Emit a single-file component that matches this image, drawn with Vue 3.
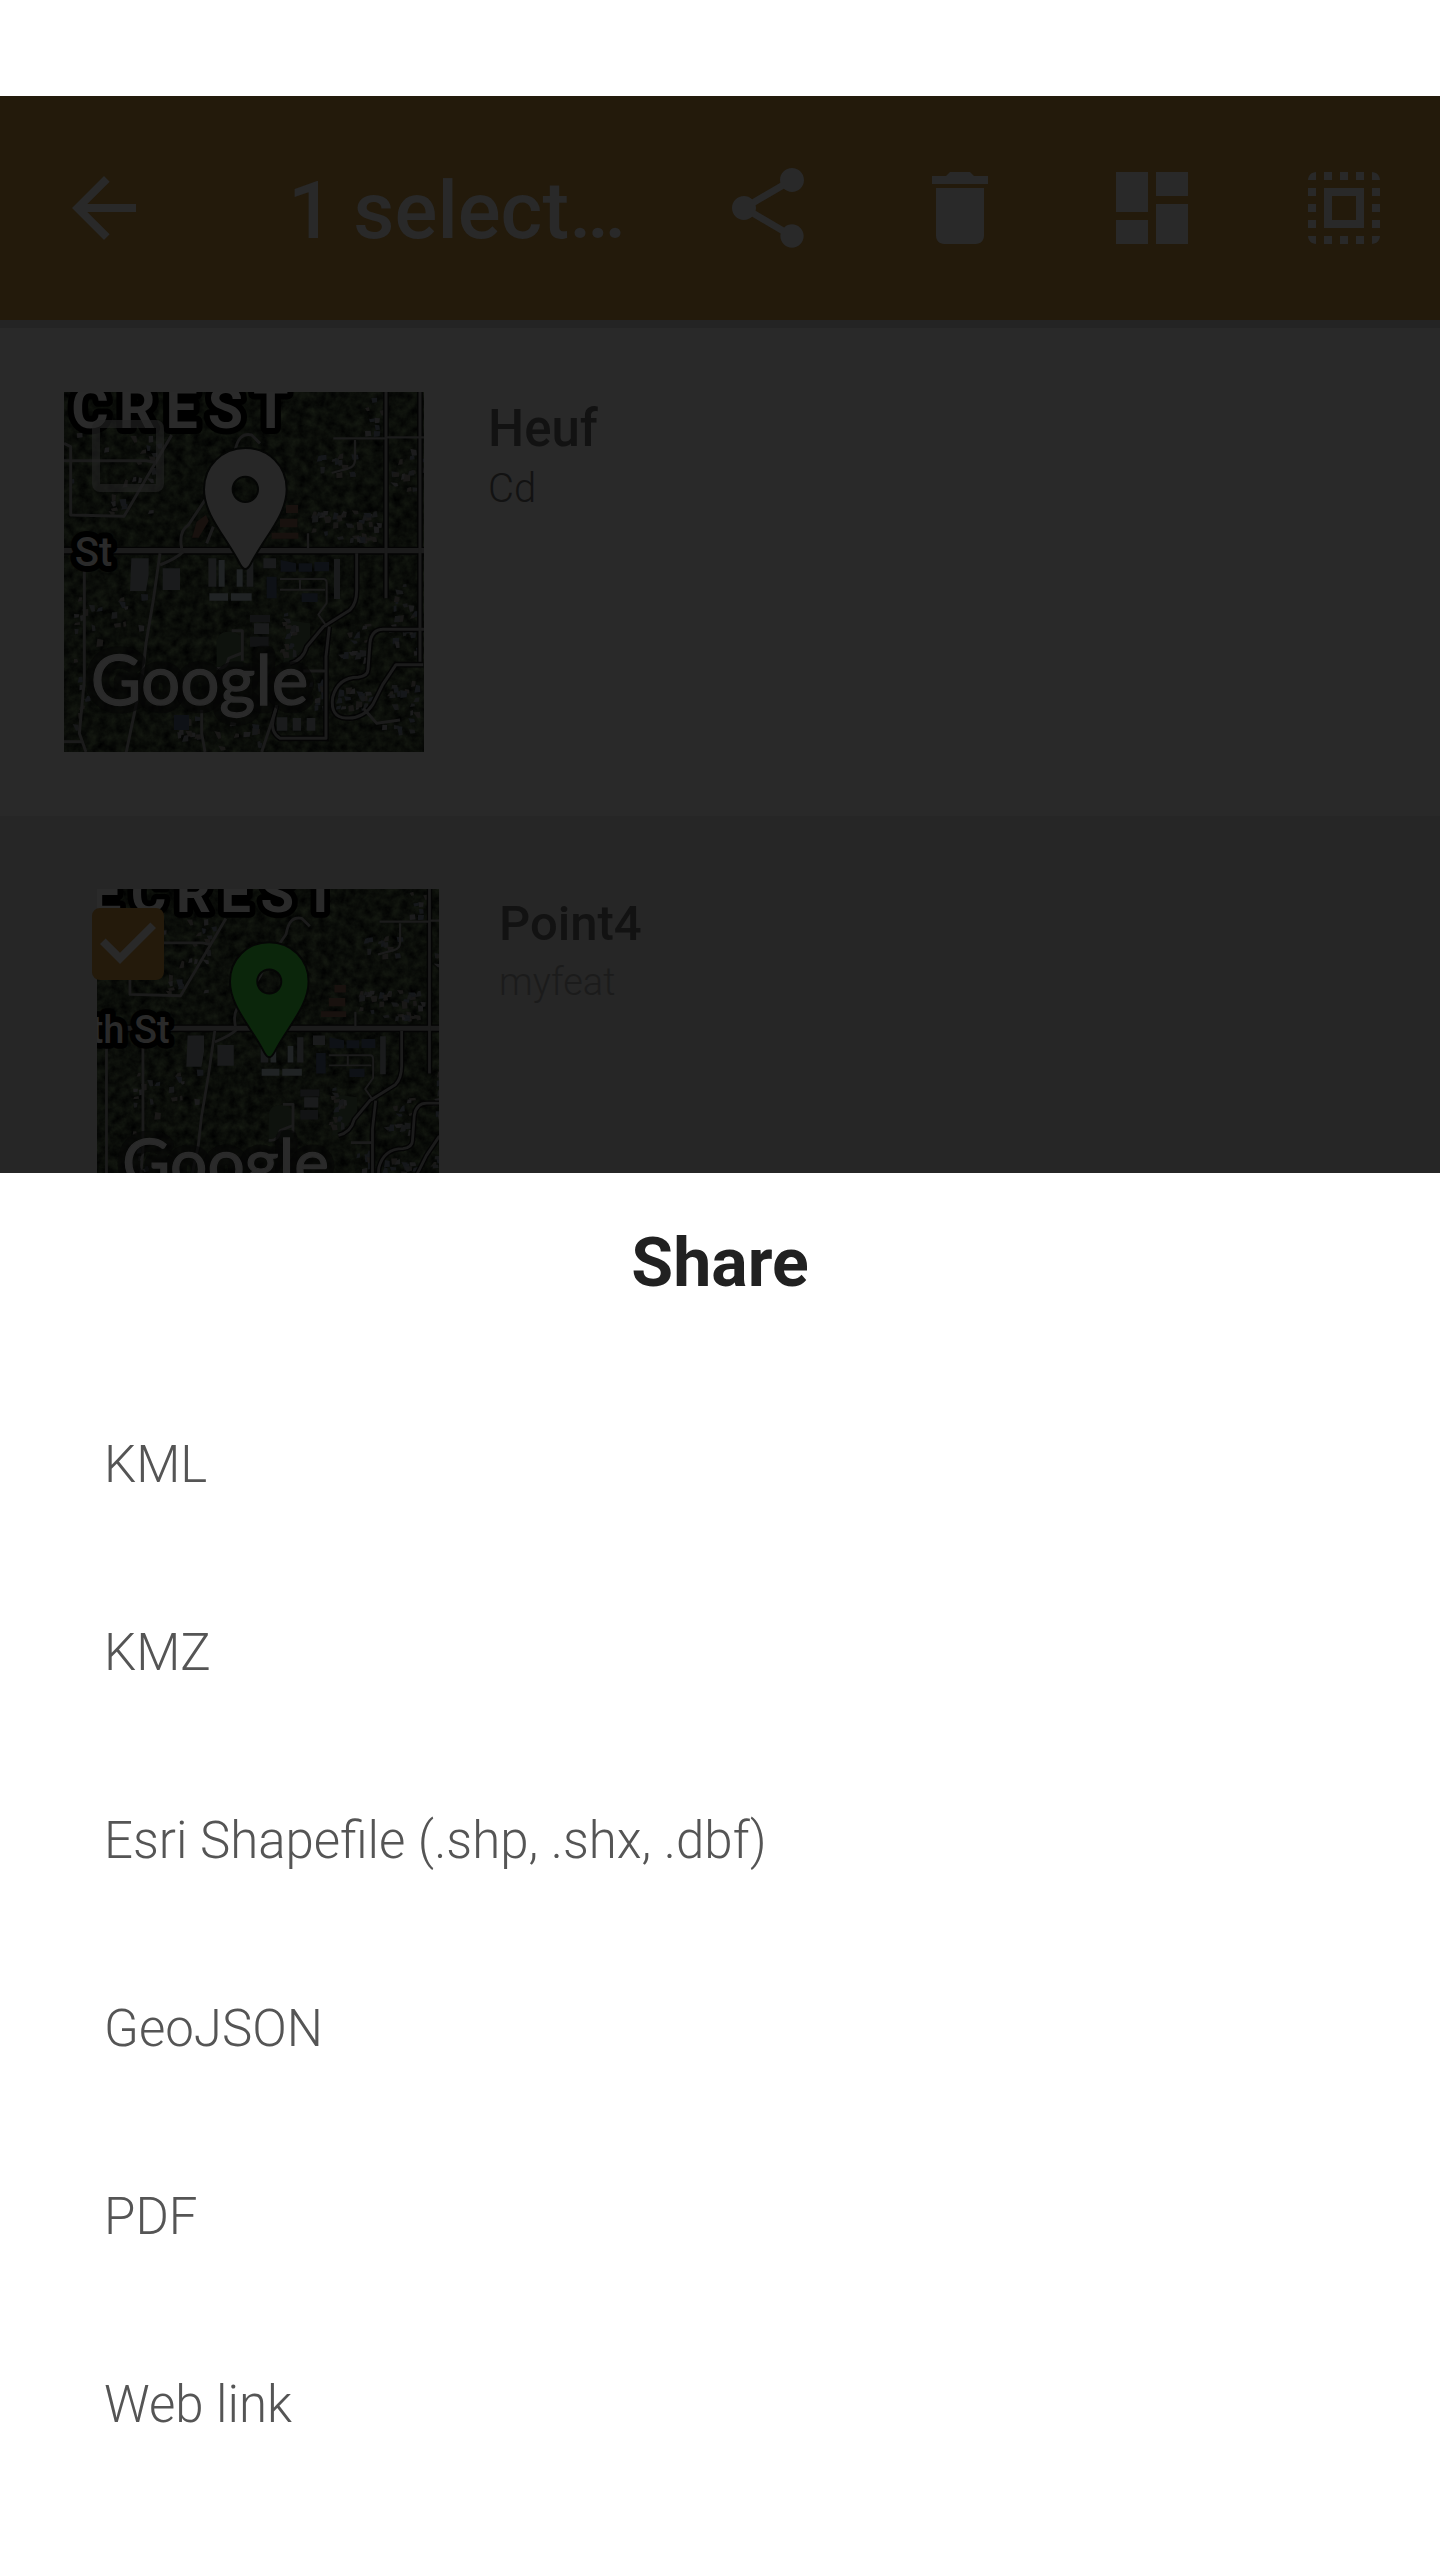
<script setup>
import { ref } from 'vue'

const actions = [
  {
    label: 'Share',
    path: 'M18 16.08c-.76 0-1.44.3-1.96.77L8.91 12.7c.05-.23.09-.46.09-.7s-.04-.47-.09-.7l7.05-4.11c.54.5 1.25.81 2.04.81 1.66 0 3-1.34 3-3s-1.34-3-3-3-3 1.34-3 3c0 .24.04.47.09.7L8.04 9.81C7.5 9.31 6.79 9 6 9c-1.66 0-3 1.34-3 3s1.34 3 3 3c.79 0 1.5-.31 2.04-.81l7.12 4.16c-.05.21-.08.43-.08.65 0 1.61 1.31 2.92 2.92 2.92s2.92-1.31 2.92-2.92-1.31-2.92-2.92-2.92z'
  },
  {
    label: 'Delete',
    path: 'M6 19c0 1.1.9 2 2 2h8c1.1 0 2-.9 2-2V7H6v12zM19 4h-3.5l-1-1h-5l-1 1H5v2h14V4z'
  },
  { label: 'Dashboard', path: 'M3 13h8V3H3v10zm0 8h8v-6H3v6zm10 0h8V11h-8v10zm0-18v6h8V3h-8z' },
  {
    label: 'Select all',
    path: 'M3 5h2V3c-1.1 0-2 .9-2 2zm0 8h2v-2H3v2zm4 8h2v-2H7v2zM3 9h2V7H3v2zm10-6h-2v2h2V3zm6 0v2h2c0-1.1-.9-2-2-2zM5 21v-2H3c0 1.1.9 2 2 2zm-2-4h2v-2H3v2zM9 3H7v2h2V3zm2 18h2v-2h-2v2zm8-8h2v-2h-2v2zm0 8c1.1 0 2-.9 2-2h-2v2zm0-12h2V7h-2v2zm0 8h2v-2h-2v2zm-4 4h2v-2h-2v2zm0-16h2V3h-2v2zM7 17h10V7H7v10zm2-8h6v6H9V9z'
  }
]

const features = ref([
  {
    id: 'heuf',
    name: 'Heuf',
    note: 'Cd',
    district: 'CREST',
    districtX: 64,
    street: 'St',
    streetX: 74,
    pin: '#272727',
    dx: 0,
    dy: 0,
    selected: false
  },
  {
    id: 'point4',
    name: 'Point4',
    note: 'myfeat',
    district: 'ECREST',
    districtX: -62,
    street: 'th St',
    streetX: -62,
    pin: '#0b260b',
    dx: 84,
    dy: -36,
    selected: true
  }
])

const formats = ['KML', 'KMZ', 'Esri Shapefile (.shp, .shx, .dbf)', 'GeoJSON', 'PDF', 'Web link']

const houses = []
let seed = 7
const rand = () => {
  seed = (seed * 16807) % 2147483647
  return seed / 2147483647
}
const blocks = [
  [60, 160, 260, 150, 16],
  [780, 390, 200, 90, 40],
  [800, 210, 120, 80, 12],
  [1020, 200, 90, 130, 14],
  [60, 640, 230, 140, 18],
  [60, 830, 60, 220, 8],
  [860, 730, 90, 140, 14],
  [860, 920, 100, 80, 18],
  [980, 880, 120, 170, 20],
  [1020, 600, 80, 240, 22],
  [690, 690, 40, 140, 16],
  [370, 990, 80, 80, 10],
  [470, 1020, 160, 80, 10],
  [940, 50, 50, 110, 8],
  [780, 890, 50, 110, 10],
  [150, 340, 200, 60, 8]
]
for (const [x, y, w, h, n] of blocks) {
  for (let i = 0; i < n; i++) {
    const px = Math.round(x + rand() * w)
    const py = Math.round(y + rand() * h)
    houses.push({
      d: `M${px} ${py}l${Math.round(8 + rand() * 14)} ${Math.round(rand() * 8 - 4)}l${Math.round(rand() * 6 - 3)} ${Math.round(8 + rand() * 12)}l-${Math.round(8 + rand() * 12)} 2z`,
      fill: ['#1c1c1d', '#171819', '#191817', '#15171a'][Math.floor(rand() * 4)]
    })
  }
}
</script>

<template>
  <div class="app">
    <div class="status-bar"></div>

    <header class="toolbar">
      <button class="back" type="button" aria-label="Back">
        <svg class="icon" viewBox="0 0 24 24" aria-hidden="true">
          <path d="M20 11H7.83l5.59-5.59L12 4l-8 8 8 8 1.41-1.41L7.83 13H20v-2z" />
        </svg>
      </button>
      <h1 class="title">1 selected</h1>
      <button v-for="a in actions" :key="a.label" class="action" type="button" :aria-label="a.label">
        <svg class="icon" viewBox="0 0 24 24" aria-hidden="true"><path :d="a.path" /></svg>
      </button>
    </header>

    <main class="features">
      <article v-for="f in features" :key="f.id" class="feature" :class="{ selected: f.selected }">
        <svg class="thumb" viewBox="42 36 1080 1080" aria-hidden="true">
          <defs>
            <filter :id="'trees-' + f.id" x="0" y="0" width="1" height="1" color-interpolation-filters="sRGB">
              <feTurbulence type="fractalNoise" baseFrequency="0.035" numOctaves="4" seed="5" />
              <feColorMatrix values="0.1 0 0 0 -0.01  0.12 0 0 0 -0.01  0.08 0 0 0 -0.006  0 0 0 0 1" />
            </filter>
          </defs>
          <rect x="42" y="36" width="1080" height="1080" :filter="`url(#trees-${f.id})`" />

          <g :transform="`translate(${f.dx} ${f.dy})`">
            <path d="M500 790q0-40 50-35l30 15v90h-80zM710 720l70 10v50l-60 70h-20z" fill="#0e120d" />
            <path v-for="(h, i) in houses" :key="i" :d="h.d" :fill="h.fill" />

            <g fill="none" stroke="#040404" stroke-width="17">
              <path d="M-60 512H1140" stroke-width="24" />
              <path d="M1008 36V655M1110 36V845" />
              <path d="M720 850q40-10 50-50l50-60 80-50q20-20 20-60V520M838 740l-10 90v245H690q-30-20-20-60l10-40" />
              <path d="M1122 748H1000q-35 0-40 40l-6 80q0 20-30 24-60 0-76 60-8 60 40 62 50 4 80-40l30-60 40-60h82" />
            </g>
            <g fill="none" stroke="#1b1b1b" stroke-width="9" stroke-linejoin="round">
              <path d="M-60 512H1140" stroke-width="16" />
              <path d="M1008 36V655M1110 36V845" />
              <path d="M42 242H290l30 6M42 190l20 10v205l160 4L365 165M103 560V900l-15 160 20 56M-12 560V1150M330 520l-20 140-22 130-10 90-50 240" />
              <path d="M395 505q-10-50 20-70l60-90q10-30 80-130 10-60 50-50l25 25M470 490l20-50M330 555q50-20 70-40" />
              <path d="M850 175H1008M915 180v60q0 20-20 25l-50 14M1008 172h120M774 460v46" stroke-width="7" />
              <path d="M690 597H820q10 0 10 12v60l-25 35 25 35M690 629H825M750 600v28" stroke-width="6" />
              <path d="M720 850q40-10 50-50l50-60 80-50q20-20 20-60V520M838 740l-10 90v245H690q-30-20-20-60l10-40" />
              <path d="M760 873h68M545 752h32v90M500 865q30 5 36-30l40-16M455 990v70l10 56M680 980l-45 136" />
              <path d="M1122 748H1000q-35 0-40 40l-6 80q0 20-30 24-60 0-76 60-8 60 40 62 50 4 80-40l30-60 40-60h82M940 985l40 45 70-10" />
              <path d="M42 1085h55" />
            </g>

            <g fill="#1a1b1c">
              <path d="M244 535h52v50l-8 48h-48zM338 565h52v65h-52zM640 535h38v30h-38zM852 537h18v120h-18zM612 730h45v32h-45z" />
              <path d="M478 640h56v22h-56zM543 640h62v22h-62zM506 540h18v80h-18zM560 568h18v52h-18z" fill="#202324" />
              <path d="M475 535h24v85h-24zM590 540h20v80h-20zM680 1012h32v40h-32zM728 1014h25v38h-25zM770 1014h26v38h-26z" />
              <path d="M692 540l46 10v25h-46zM746 550h40v25h-40zM793 546h44v28h-44zM650 590h30v65h-30zM755 640h48v26h-48zM372 1005h45v45h-45z" fill="#0e1116" />
              <path d="M708 375h36v24h-36zM690 416h52v26h-52zM665 458h80v18h-80zM440 425l28-20 8 18-30 50h-20z" fill="#18110e" />
              <path d="M600 705h60v22h-60zM600 770h56v30h-56z" fill="#121314" />
            </g>

            <g class="map-label">
              <text class="district" :x="f.districtX" y="145">{{ f.district }}</text>
              <text class="street" :x="f.streetX" y="557">{{ f.street }}</text>
            </g>
          </g>

          <text class="brand brand-halo" x="122" y="974">Google</text>
          <text class="brand" x="122" y="974">Google</text>

          <path
            d="M586 204c-70 0-124 54-124 124 0 78 66 142 108 224q16 30 32 0c42-82 108-146 108-224 0-70-54-124-124-124zm0 86a38 38 0 1 1 0 76 38 38 0 0 1 0-76z"
            :fill="f.pin"
            fill-rule="evenodd"
            stroke="#050605"
            stroke-width="6"
          />
        </svg>

        <div class="text">
          <h2 class="name">{{ f.name }}</h2>
          <p class="note">{{ f.note }}</p>
        </div>

        <label class="check">
          <input v-model="f.selected" type="checkbox" :aria-label="'Select ' + f.name" />
          <svg v-if="f.selected" viewBox="3 3 18 18" aria-hidden="true">
            <path d="M10 17l-5-5 1.4-1.4L10 14.2l7.6-7.6L19 8z" />
          </svg>
        </label>
      </article>
    </main>

    <section class="sheet" role="dialog" aria-labelledby="sheet-title">
      <h2 id="sheet-title" class="sheet-title">Share</h2>
      <ul class="formats">
        <li v-for="f in formats" :key="f">
          <button class="format" type="button">{{ f }}</button>
        </li>
      </ul>
    </section>
  </div>
</template>

<style>
body {
  margin: 0;
  background: #fff;
}
</style>

<style scoped>
.app {
  display: flex;
  flex-direction: column;
  height: 100vh;
  overflow: hidden;
  background: #fff;
  font-family: Roboto, 'Liberation Sans', sans-serif;
}

h1,
h2,
p,
ul {
  margin: 0;
  padding: 0;
}

button {
  border: 0;
  padding: 0;
  background: none;
  font: inherit;
  cursor: pointer;
}

.status-bar {
  flex: none;
  height: 96px;
}

.toolbar {
  display: flex;
  flex: none;
  align-items: center;
  height: 224px;
  background: #231a0b;
  color: #292929;
}

.back {
  flex: none;
  width: 208px;
  height: 224px;
}

.action {
  flex: none;
  width: 192px;
  height: 224px;
}

.icon {
  display: block;
  width: 96px;
  height: 96px;
  margin: 0 auto;
  fill: #292929;
}

.title {
  flex: 1;
  min-width: 0;
  padding: 6px 40px 0 80px;
  overflow: hidden;
  text-overflow: ellipsis;
  white-space: nowrap;
  font-size: 80px;
  font-weight: 500;
  line-height: 96px;
}

.features {
  flex: 1;
  min-height: 0;
  overflow: hidden;
  border-top: 8px solid #242424;
  background: #262626;
}

.feature {
  position: relative;
  display: flex;
  gap: 64px;
  box-sizing: border-box;
  height: 488px;
  padding: 64px;
  background: #292929;
}

.feature.selected {
  gap: 60px;
  padding: 73px 97px;
  background: #262626;
}

.thumb {
  flex: none;
  width: 360px;
  height: 360px;
}

.selected .thumb {
  width: 342px;
  height: 342px;
}

.map-label text {
  fill: #2a2a2a;
  stroke: #000;
  stroke-linejoin: round;
  paint-order: stroke;
}

.district {
  font-size: 172px;
  font-weight: 700;
  letter-spacing: 30px;
  stroke-width: 36px;
}

.street {
  font-size: 120px;
  font-weight: 500;
  stroke-width: 36px;
}

.brand {
  fill: #2a2a2a;
  stroke: #2a2a2a;
  stroke-width: 4px;
  font-family: Lato, sans-serif;
  font-size: 208px;
}

.brand-halo {
  fill: none;
  stroke: #050505;
  stroke-opacity: 0.6;
  stroke-width: 50px;
  stroke-linejoin: round;
}

.text {
  padding-top: 5px;
  color: #121212;
}

.name {
  font-size: 51px;
  font-weight: 500;
  line-height: 64px;
}

.note {
  font-size: 40px;
  font-weight: 300;
  line-height: 56px;
}

.selected .name {
  font-size: 49px;
  line-height: 60px;
}

.selected .note {
  color: #1b1b1b;
  font-size: 38px;
}

.check {
  position: absolute;
  top: 92px;
  left: 92px;
  width: 72px;
  height: 72px;
}

.check input {
  display: block;
  box-sizing: border-box;
  width: 72px;
  height: 72px;
  margin: 0;
  border: 8px solid rgba(36, 36, 36, 0.6);
  border-radius: 8px;
  appearance: none;
}

.check input:checked {
  border-color: #241a0b;
  background: #241a0b;
}

.check svg {
  position: absolute;
  inset: 0;
  fill: #292929;
  pointer-events: none;
}

.sheet {
  flex: none;
  padding: 50px 0 61px;
  background: #fff;
}

.sheet-title {
  padding-bottom: 68px;
  color: #212121;
  font-size: 68px;
  font-weight: 700;
  line-height: 80px;
  text-align: center;
}

.formats {
  list-style: none;
}

.format {
  display: block;
  width: 100%;
  padding: 0 104px;
  color: #555;
  font-size: 51px;
  font-weight: 300;
  line-height: 188px;
  text-align: left;
}
</style>
